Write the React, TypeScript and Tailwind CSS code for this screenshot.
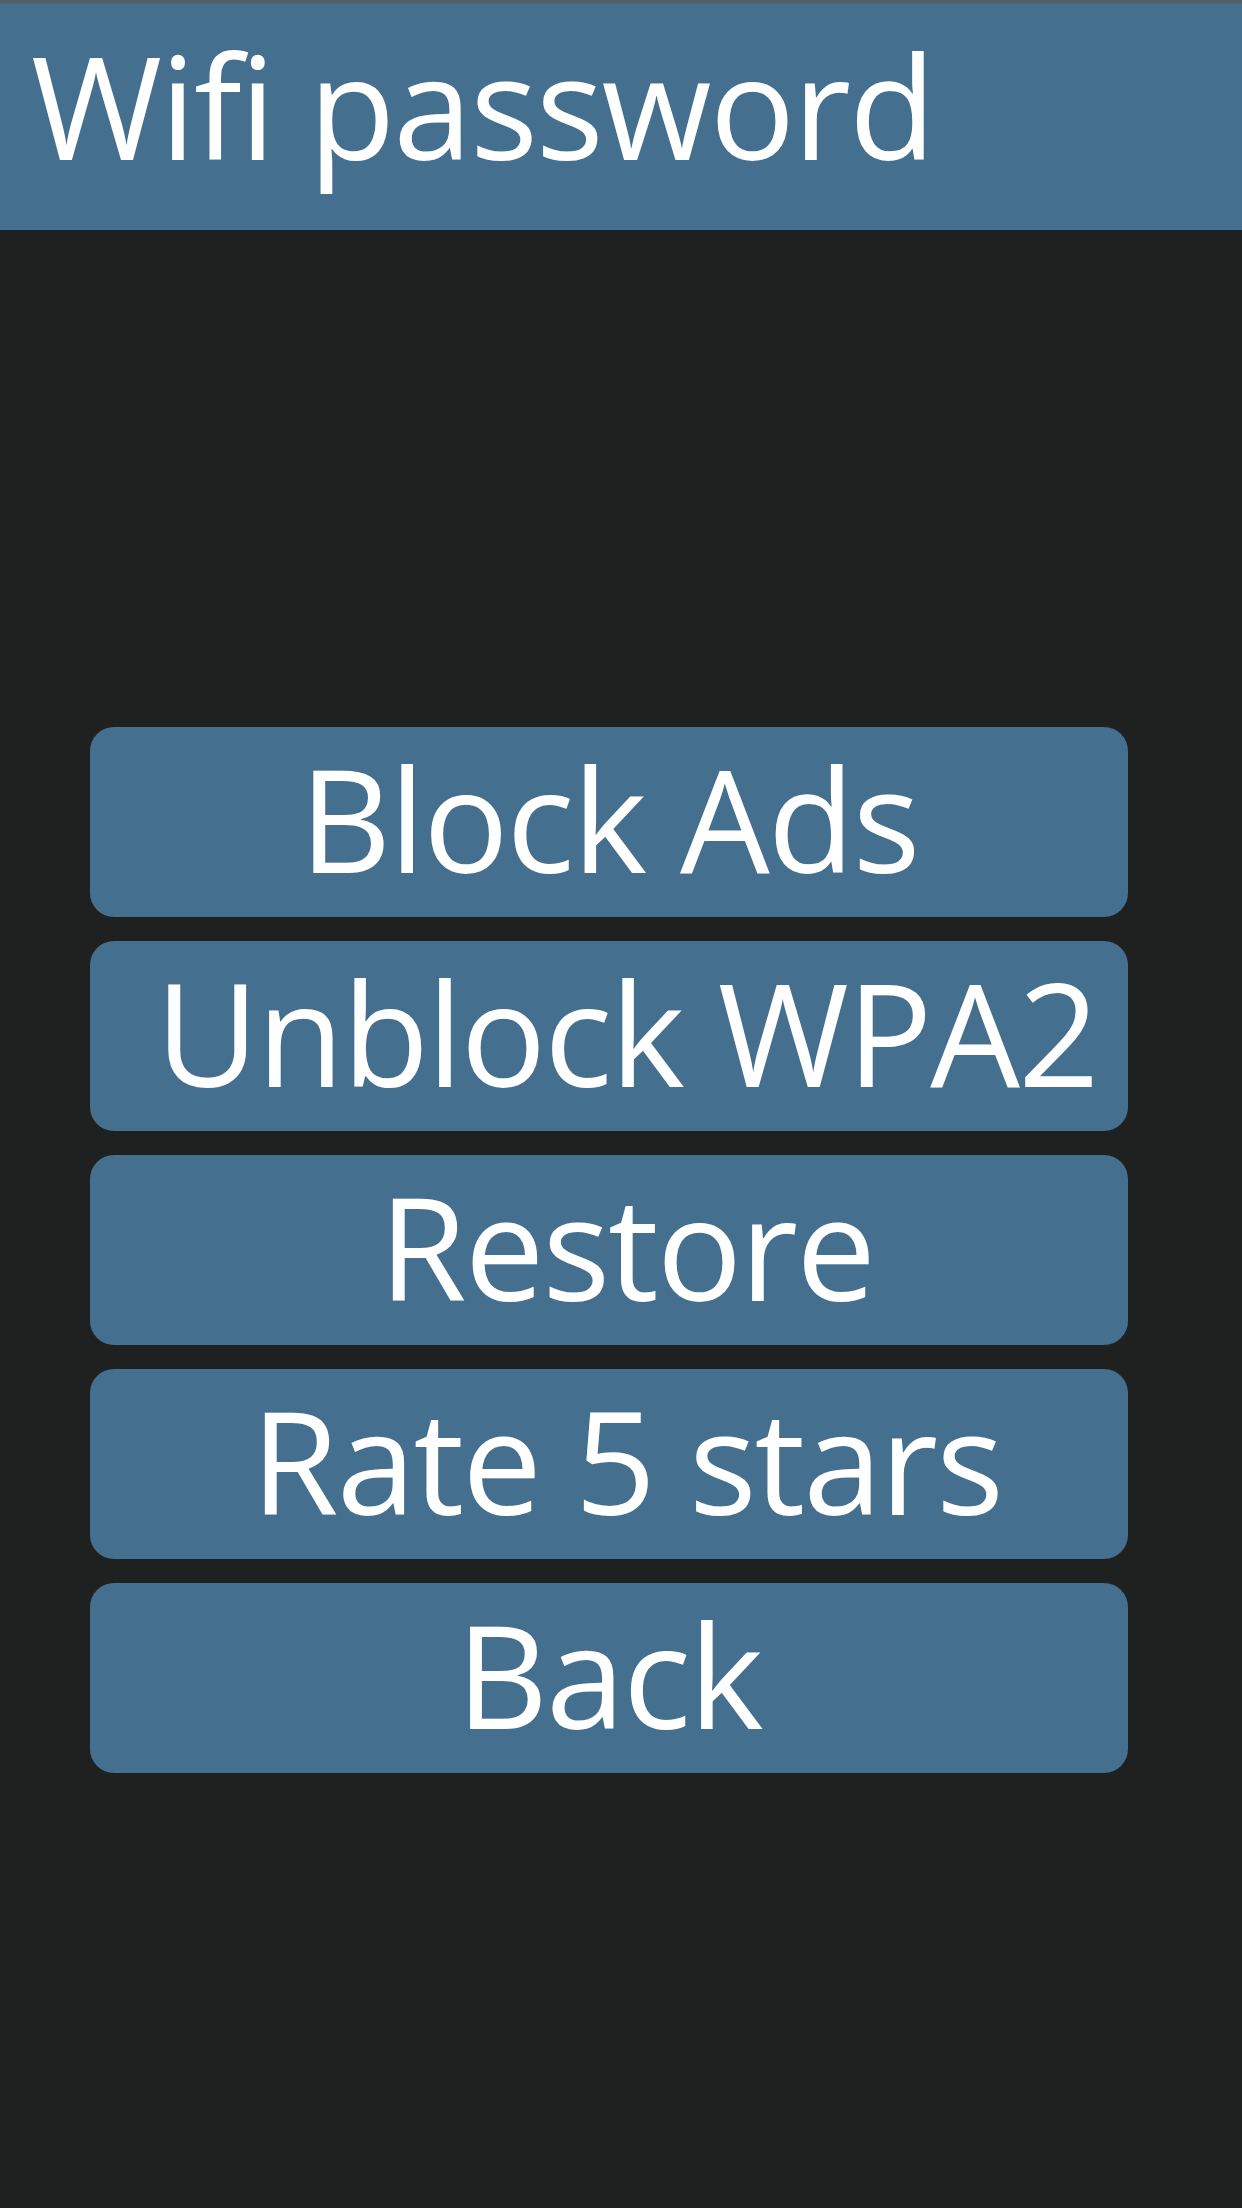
const buttons = ["Block Ads", " Unblock WPA2", " Restore", " Rate 5 stars", "Back"];

export default function App() {
  return (
    <div
      className="min-h-[2208px] w-full bg-[#1f2120] flex flex-col"
      style={{ fontFamily: '"Open Sans", "Noto Sans", sans-serif' }}
    >
      <div className="h-[3px] bg-[#5a5d60]" />
      {/* Header */}
      <header className="h-[227px] bg-[#456f8f] px-[31px] pt-[31px]">
        <h1 className="text-[142px] leading-none text-white font-normal whitespace-nowrap tracking-[-2px]">
          Wifi password
        </h1>
      </header>

      {/* Menu */}
      <nav className="flex flex-col gap-[24px] pt-[497px] pl-[90px] pr-[114px]">
        {buttons.map((label) => (
          <button
            key={label}
            className="h-[190px] rounded-[24px] bg-[#456f8f] flex items-center justify-center pb-[8px]"
          >
            <span className="text-[142px] leading-none text-white whitespace-pre tracking-[-2px]">
              {label}
            </span>
          </button>
        ))}
      </nav>
    </div>
  );
}
